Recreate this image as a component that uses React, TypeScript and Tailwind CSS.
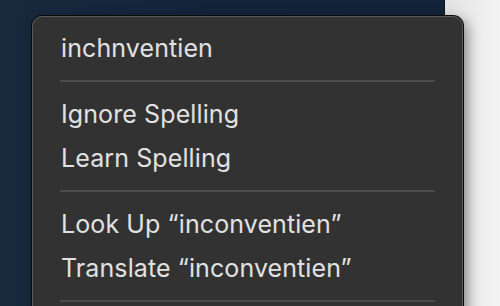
import React from "react"

const Separator = () => (
  <div className="py-[10px]">
    <div className="h-[2px] bg-[#4b4b4b]" />
  </div>
)

const Item = ({ children }: { children: React.ReactNode }) => (
  <div className="flex h-[44px] items-center px-[1px] text-[25px] leading-none tracking-[0.1px] text-[#e1e1e1]">
    {children}
  </div>
)

export default function App() {
  return (
    <div
      className="relative flex h-[306px] w-[500px] overflow-hidden"
      style={{ fontFamily: "Inter, 'Noto Sans', sans-serif" }}
    >
      {/* window behind */}
      <div className="h-full w-[444px] bg-gradient-to-r from-[#172a3d] via-[#12243a] to-[#12233a]" />
      <div className="h-full flex-1 border-l border-[#0a1420] bg-gradient-to-r from-[#e2e2e2] to-[#f4f4f4]" />

      {/* context menu */}
      <div className="absolute left-[32px] top-[16px] w-[431px] rounded-[10px] bg-[#323232] px-[28px] pb-[40px] pt-[10px] shadow-[0_0_0_1px_#0b0b0b,inset_0_0_0_1px_#5a5a5a,4px_4px_14px_rgba(0,0,0,0.45)]">
        <Item>inchnventien</Item>
        <Separator />
        <Item>Ignore Spelling</Item>
        <Item>Learn Spelling</Item>
        <Separator />
        <Item>Look Up “inconventien”</Item>
        <Item>Translate “inconventien”</Item>
        <Separator />
      </div>
    </div>
  )
}
